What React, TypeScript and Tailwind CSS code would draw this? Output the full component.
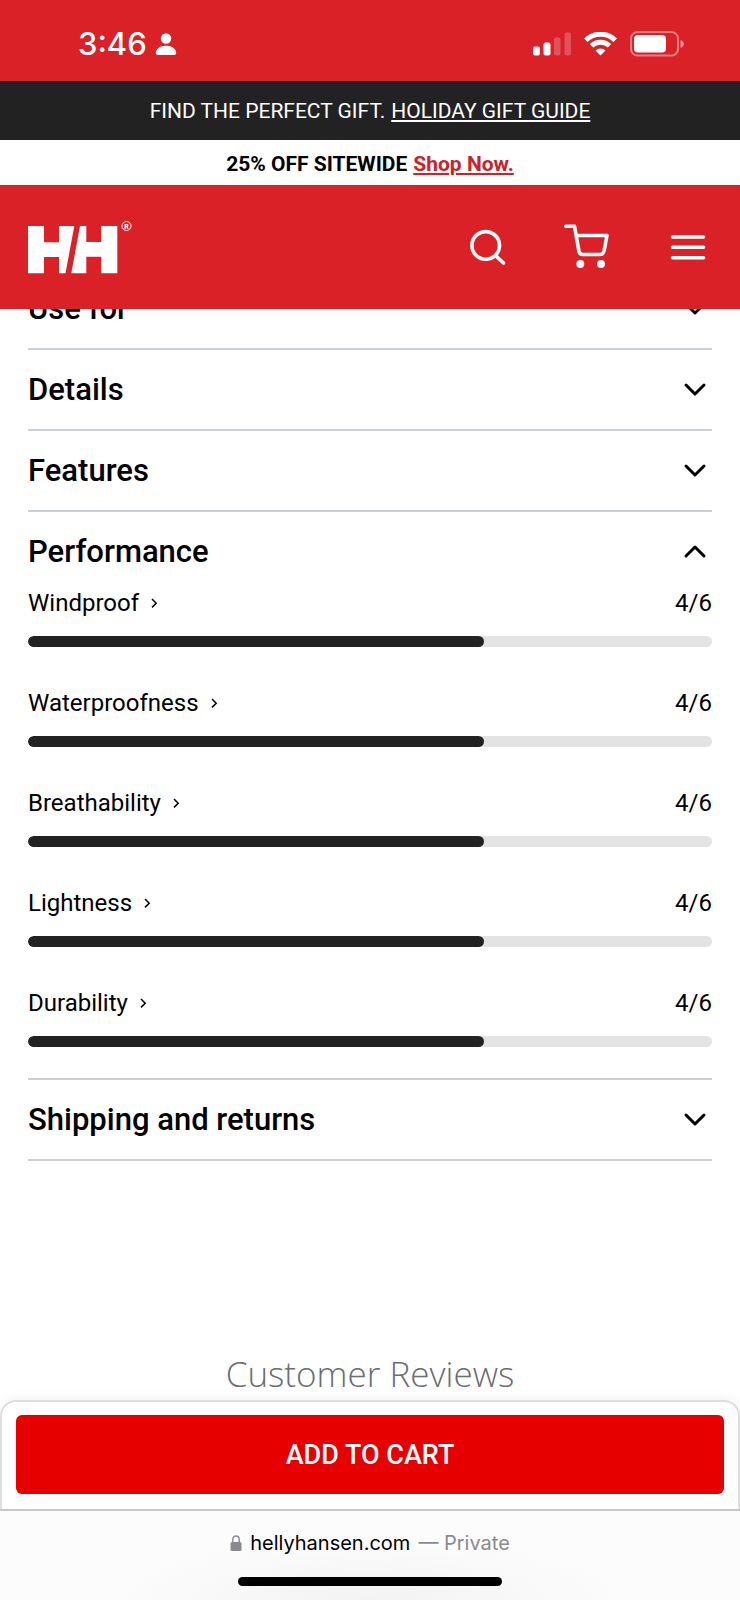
import React, { useState } from 'react';

type Section = { id: string; title: string };

const sections: Section[] = [
  { id: 'use-for', title: 'Use for' },
  { id: 'details', title: 'Details' },
  { id: 'features', title: 'Features' },
  { id: 'performance', title: 'Performance' },
  { id: 'shipping', title: 'Shipping and returns' },
];

const ratings: { label: string; score: number }[] = [
  { label: 'Windproof', score: 4 },
  { label: 'Waterproofness', score: 4 },
  { label: 'Breathability', score: 4 },
  { label: 'Lightness', score: 4 },
  { label: 'Durability', score: 4 },
];

const MAX_SCORE = 6;

function StatusBar() {
  return (
    <div className="flex h-[81px] items-center justify-between bg-[#da2128] pt-[6px] pr-14 pl-[78px] text-white">
      <div className="flex items-center gap-2">
        <span className="font-[Inter,sans-serif] text-[31px] leading-8 font-medium">3:46</span>
        <svg className="h-[22px] w-[22px]" viewBox="0 0 22 22" fill="currentColor" aria-hidden="true">
          <circle cx="11" cy="5.5" r="5.2" />
          <path d="M.8 20C.8 15.5 5.5 12.8 11 12.8S21.2 15.5 21.2 20c0 1.3-.7 2-2 2H2.8c-1.3 0-2-.7-2-2z" />
        </svg>
      </div>
      <div className="flex items-center gap-3">
        <svg className="h-6 w-[39px]" viewBox="0 0 39 24" fill="currentColor" aria-hidden="true">
          <rect x="0" y="14.5" width="7" height="9" rx="2" />
          <rect x="10.5" y="10.5" width="7" height="13" rx="2" />
          <rect x="21" y="5.5" width="6.5" height="18" rx="2" opacity="0.22" />
          <rect x="31.5" y="0.5" width="6.5" height="23" rx="2" opacity="0.22" />
        </svg>
        <svg className="h-6 w-[34px]" viewBox="0 0 34 24" aria-hidden="true">
          <path d="M1.800 8.200a21 21 0 0 1 29.400 0M7.500 13.800a13 13 0 0 1 18 0" fill="none" stroke="currentColor" strokeWidth="5" />
          <path d="M16.500 23.500l-5-5a7.500 7.500 0 0 1 10 0z" fill="currentColor" />
        </svg>
        <svg className="h-[26px] w-[54px]" viewBox="0 0 54 26" fill="none" aria-hidden="true">
          <rect x="1" y="1" width="47" height="23.5" rx="6.5" stroke="currentColor" strokeWidth="2" opacity="0.42" />
          <rect x="4" y="4" width="32" height="17.5" rx="4" fill="currentColor" />
          <path d="M50.5 9v8c2-.8 3.3-2.300 3.300-4s-1.300-3.200-3.300-4z" fill="currentColor" opacity="0.5" />
        </svg>
      </div>
    </div>
  );
}

function Logo() {
  return (
    <svg className="h-[54px] w-[104px]" viewBox="0 0 104 54" fill="#fff" role="img" aria-label="Helly Hansen">
      <path d="M0 6h16v16.300h15V6h15.300L37.500 53.300H31V37H16v16.300H0z" />
      <path d="M52 6h6.300v16h15V6h16v47.300h-16V36.700h-15v16.600H43.300z" />
      <circle cx="98.500" cy="6" r="4.500" fill="none" stroke="#fff" strokeWidth="1" />
      <text x="98.500" y="8.500" fontSize="7" fontWeight="700" textAnchor="middle" fontFamily="Roboto, sans-serif">R</text>
    </svg>
  );
}

function Header() {
  return (
    <header className="relative z-10">
      <StatusBar />
      <p className="flex h-[59px] items-center justify-center gap-[6px] bg-[#222] pt-[2px] text-[21px] text-white">
        FIND THE PERFECT GIFT.
        <a href="#gift-guide" className="underline decoration-2 underline-offset-2">HOLIDAY GIFT GUIDE</a>
      </p>
      <p className="flex h-[45px] items-center justify-center gap-[6px] bg-white pt-1 text-[21px] font-bold text-black">
        25% OFF SITEWIDE
        <a href="#sale" className="text-[#cb2229] underline decoration-2 underline-offset-2">Shop Now.</a>
      </p>
      <div className="flex h-[124px] items-center justify-between bg-[#da2128] pr-[34px] pl-7 text-white">
        <a href="#home"><Logo /></a>
        <nav className="flex items-center gap-[58px]">
          <button type="button" aria-label="Search">
            <svg className="h-9 w-9" viewBox="0 0 36 36" fill="none" stroke="currentColor" strokeWidth="3.6" strokeLinecap="round">
              <circle cx="15.7" cy="16.4" r="13.8" />
              <path d="M26 27l7.500 7" />
            </svg>
          </button>
          <button type="button" aria-label="Cart">
            <svg className="h-12 w-12" viewBox="0 0 48 48" fill="none" stroke="currentColor" strokeWidth="3.6" strokeLinecap="round" strokeLinejoin="round">
              <path d="M1.800 3.300H10.500l4.400 24.600c.4 2.200 1.300 3.600 3.500 3.600h17.600c2.200 0 3.500-1.200 4-3.400l3-15.600H12.300" />
              <circle cx="16.3" cy="41" r="4" fill="currentColor" stroke="none" />
              <circle cx="37" cy="41" r="4" fill="currentColor" stroke="none" />
            </svg>
          </button>
          <button type="button" aria-label="Menu">
            <svg className="h-9 w-9" viewBox="0 0 36 36" fill="none" stroke="currentColor" strokeWidth="3.6" strokeLinecap="round">
              <path d="M2.500 8h31M2.500 18.300h31M2.500 28.700h31" />
            </svg>
          </button>
        </nav>
      </div>
    </header>
  );
}

function RatingRow({ label, score }: { label: string; score: number }) {
  return (
    <li>
      <div className="flex items-center justify-between text-2xl leading-6">
        <button type="button" className="flex items-center gap-3">
          {label}
          <svg className="h-3 w-2" viewBox="0 0 8 12" fill="none" stroke="currentColor" strokeWidth="1.5" aria-hidden="true">
            <path d="M1 2l4.200 4.200L1 10.400" />
          </svg>
        </button>
        <span>{score}/{MAX_SCORE}</span>
      </div>
      <div
        role="progressbar"
        aria-label={label}
        aria-valuenow={score}
        aria-valuemax={MAX_SCORE}
        className="mt-[21px] h-[11px] overflow-hidden rounded-full bg-[#e3e3e3]"
      >
        <div className="h-full rounded-full bg-[#222]" style={{ width: `${(score / MAX_SCORE) * 100}%` }} />
      </div>
    </li>
  );
}

export default function App() {
  const [openId, setOpenId] = useState('performance');

  return (
    <div className="flex min-h-screen flex-col bg-white font-[Roboto,sans-serif] text-black">
      <Header />

      {/* First row is scrolled halfway under the header */}
      <main className="-mt-10 flex-1 px-7">
        {sections.map((section) => {
          const isOpen = openId === section.id;
          return (
            <section key={section.id} className="border-b-2 border-[#cbd0d4]">
              <h2>
                <button
                  type="button"
                  aria-expanded={isOpen}
                  onClick={() => setOpenId(isOpen ? '' : section.id)}
                  className="flex h-[79px] w-full items-center justify-between pr-[5px] text-left text-[31px] font-medium"
                >
                  <span className="pt-[2px]">{section.title}</span>
                  <svg
                    className="h-6 w-6"
                    viewBox="0 0 24 24"
                    fill="none"
                    stroke="currentColor"
                    strokeWidth="3"
                    strokeLinecap="round"
                    strokeLinejoin="round"
                    aria-hidden="true"
                  >
                    <path d={isOpen ? 'M3 16l9-9 9 9' : 'M3 7l9 9 9-9'} />
                  </svg>
                </button>
              </h2>
              {isOpen && section.id === 'performance' && (
                <ul className="flex flex-col gap-11 pb-[31px]">
                  {ratings.map((rating) => (
                    <RatingRow key={rating.label} {...rating} />
                  ))}
                </ul>
              )}
            </section>
          );
        })}

        <h2 className="mt-[189px] text-center font-['Open_Sans',sans-serif] text-[35px] leading-12 font-light text-[#6b6d73]">
          Customer Reviews
        </h2>
      </main>

      <footer className="sticky bottom-0 z-10">
        <div className="rounded-t-2xl border-2 border-b-0 border-[#dedede] bg-white px-[14px] pt-[13px] pb-[15px] shadow-[0_-2px_12px_rgba(0,0,0,0.05)]">
          <button type="button" className="h-[79px] w-full rounded-md bg-[#e60000] pt-[2px] text-[27px] font-medium text-white">
            ADD TO CART
          </button>
        </div>
        <div className="flex h-[91px] flex-col items-center justify-between border-t-2 border-[#c8c8c8] bg-[radial-gradient(ellipse_at_bottom,#f3f3f3,#fcfcfc_50%)] pt-4 pb-[14px] font-[Inter,sans-serif]">
          <div className="flex items-center gap-2 text-[20px] leading-8">
            <svg className="h-4 w-3" viewBox="0 0 12 16" aria-hidden="true">
              <rect x="0.5" y="7" width="11" height="9" rx="1.5" fill="#8a8a8e" />
              <path d="M2.800 8V4.500a3.200 3.500 0 0 1 6.400 0V8" fill="none" stroke="#8a8a8e" strokeWidth="1.4" />
            </svg>
            <span>hellyhansen.com</span>
            <span className="text-[#8a8a8e]">— Private</span>
          </div>
          <div className="h-[9px] w-[264px] rounded-full bg-black" />
        </div>
      </footer>
    </div>
  );
}
